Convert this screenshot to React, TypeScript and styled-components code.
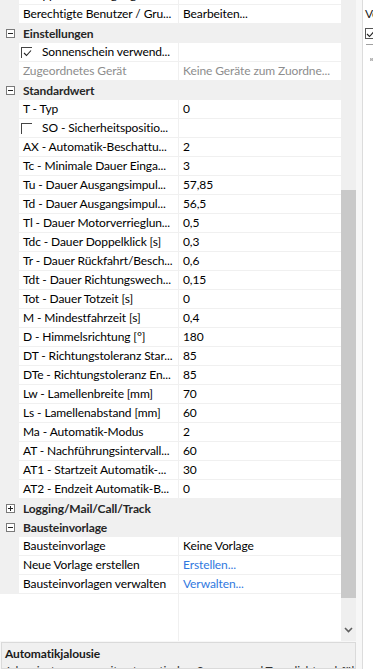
import React from "react"
import styled, { createGlobalStyle } from "styled-components"

type Row =
  | { kind: "cat"; label: string; open: boolean }
  | { kind: "prop"; name: string; value?: string; link?: boolean; disabled?: boolean; check?: boolean }

const rows: Row[] = [
  { kind: "prop", name: "Gruppenberechtigung", value: "" },
  { kind: "prop", name: "Berechtigte Benutzer / Gru...", value: "Bearbeiten..." },
  { kind: "cat", label: "Einstellungen", open: true },
  { kind: "prop", name: "Sonnenschein verwend...", value: "", check: true },
  { kind: "prop", name: "Zugeordnetes Gerät", value: "Keine Geräte zum Zuordne...", disabled: true },
  { kind: "cat", label: "Standardwert", open: true },
  { kind: "prop", name: "T - Typ", value: "0" },
  { kind: "prop", name: "SO - Sicherheitspositio...", value: "", check: false },
  { kind: "prop", name: "AX - Automatik-Beschattu...", value: "2" },
  { kind: "prop", name: "Tc - Minimale Dauer Einga...", value: "3" },
  { kind: "prop", name: "Tu - Dauer Ausgangsimpul...", value: "57,85" },
  { kind: "prop", name: "Td - Dauer Ausgangsimpul...", value: "56,5" },
  { kind: "prop", name: "Tl - Dauer Motorverrieglun...", value: "0,5" },
  { kind: "prop", name: "Tdc - Dauer Doppelklick [s]", value: "0,3" },
  { kind: "prop", name: "Tr - Dauer Rückfahrt/Besch...", value: "0,6" },
  { kind: "prop", name: "Tdt - Dauer Richtungswech...", value: "0,15" },
  { kind: "prop", name: "Tot - Dauer Totzeit [s]", value: "0" },
  { kind: "prop", name: "M - Mindestfahrzeit [s]", value: "0,4" },
  { kind: "prop", name: "D - Himmelsrichtung [°]", value: "180" },
  { kind: "prop", name: "DT - Richtungstoleranz Star...", value: "85" },
  { kind: "prop", name: "DTe - Richtungstoleranz En...", value: "85" },
  { kind: "prop", name: "Lw - Lamellenbreite [mm]", value: "70" },
  { kind: "prop", name: "Ls - Lamellenabstand [mm]", value: "60" },
  { kind: "prop", name: "Ma - Automatik-Modus", value: "2" },
  { kind: "prop", name: "AT - Nachführungsintervall...", value: "60" },
  { kind: "prop", name: "AT1 - Startzeit Automatik-...", value: "30" },
  { kind: "prop", name: "AT2 - Endzeit Automatik-B...", value: "0" },
  { kind: "cat", label: "Logging/Mail/Call/Track", open: false },
  { kind: "cat", label: "Bausteinvorlage", open: true },
  { kind: "prop", name: "Bausteinvorlage", value: "Keine Vorlage" },
  { kind: "prop", name: "Neue Vorlage erstellen", value: "Erstellen...", link: true },
  { kind: "prop", name: "Bausteinvorlagen verwalten", value: "Verwalten...", link: true },
]

const Expander: React.FC<{ open: boolean }> = ({ open }) => (
  <S.Expander>
    <svg width="9" height="9" viewBox="0 0 9 9">
      <rect x="0.5" y="0.5" width="8" height="8" fill="#fff" stroke="#7a7a7a" />
      <line x1="2" y1="4.5" x2="7" y2="4.5" stroke="#222" />
      {!open && <line x1="4.5" y1="2" x2="4.5" y2="7" stroke="#222" />}
    </svg>
  </S.Expander>
)

const CheckMark = () => (
  <svg width="9" height="8" viewBox="0 0 9 8">
    <polyline points="1,4 3.5,6.5 8,1.5" fill="none" stroke="#222" strokeWidth="1.1" />
  </svg>
)

export default function App() {
  return (
    <>
      <GlobalStyle />
      <S.Page>
        <S.LeftPane>
          <S.GridArea>
            <S.GridBody>
              <S.Rows>
                {rows.map((r, i) =>
                  r.kind === "cat" ? (
                    <S.CatRow key={i}>
                      <Expander open={r.open} />
                      <S.CatLabel>{r.label}</S.CatLabel>
                    </S.CatRow>
                  ) : (
                    <S.PropRow key={i}>
                      <S.Margin />
                      <S.Name disabled={r.disabled}>
                        {r.check !== undefined && <S.Check>{r.check && <CheckMark />}</S.Check>}
                        {r.name}
                      </S.Name>
                      <S.Value disabled={r.disabled} link={r.link}>
                        {r.value}
                      </S.Value>
                    </S.PropRow>
                  )
                )}
              </S.Rows>
              <S.Filler>
                <div />
                <S.FillerName />
                <div />
              </S.Filler>
            </S.GridBody>
            <S.Scrollbar>
              <S.Track>
                <S.Thumb />
              </S.Track>
              <S.ArrowButton>
                <svg width="9" height="6" viewBox="0 0 9 6">
                  <polyline points="1,1 4.5,4.5 8,1" fill="none" stroke="#606060" strokeWidth="1.6" />
                </svg>
              </S.ArrowButton>
            </S.Scrollbar>
          </S.GridArea>
          <S.Description>
            <S.DescTitle>Automatikjalousie</S.DescTitle>
            <S.DescText>Jalousiesteuerung mit automatischer Sonnen- und Tageslichtnachführung</S.DescText>
          </S.Description>
        </S.LeftPane>
        <S.RightPane>
          <S.SideCut>Aktiv</S.SideCut>
          <S.SideLabel>Verbindungen</S.SideLabel>
          <S.SideCheck>
            <CheckMark />
          </S.SideCheck>
          <S.SideRule />
          <S.SideExpander>
            <Expander open={true} />
          </S.SideExpander>
        </S.RightPane>
      </S.Page>
    </>
  )
}

const GlobalStyle = createGlobalStyle`
  html, body {
    margin: 0;
    padding: 0;
    background: #fff;
  }
  body {
    font-family: Lato, "Noto Sans", sans-serif;
    font-size: 12px;
    letter-spacing: -0.1px;
    color: #000;
  }
`

const S = {
  Page: styled.div`
    display: flex;
    width: 373px;
    height: 669px;
    overflow: hidden;
  `,
  LeftPane: styled.div`
    display: flex;
    flex-direction: column;
    width: 362px;
    background: #f7f7f7;
  `,
  GridArea: styled.div`
    display: flex;
    height: 641px;
    flex-shrink: 0;
  `,
  GridBody: styled.div`
    display: flex;
    flex-direction: column;
    width: 341px;
    background: #fff;
    overflow: hidden;
  `,
  Rows: styled.div`
    margin-top: -14px;
    display: flex;
    flex-direction: column;
  `,
  PropRow: styled.div`
    display: grid;
    grid-template-columns: 19px 160px 1fr;
    height: 19px;
    box-sizing: border-box;
    border-bottom: 1px solid #f0f0f0;
    line-height: 18px;
  `,
  Margin: styled.div`
    background: #f0f0f0;
  `,
  Name: styled.div<{ disabled?: boolean }>`
    display: flex;
    align-items: center;
    padding-left: 4px;
    border-right: 1px solid #f0f0f0;
    white-space: nowrap;
    overflow: hidden;
    color: ${({ disabled }) => (disabled ? "#8d8d8d" : "#000")};
  `,
  Value: styled.div<{ disabled?: boolean; link?: boolean }>`
    padding-left: 4px;
    white-space: nowrap;
    overflow: hidden;
    color: ${({ disabled, link }) => (disabled ? "#8d8d8d" : link ? "#2f78e0" : "#000")};
  `,
  Check: styled.span`
    display: flex;
    align-items: center;
    justify-content: center;
    width: 11px;
    height: 11px;
    box-sizing: border-box;
    margin: 0 10px 0 -2px;
    border-top: 1px solid #444;
    border-left: 1px solid #444;
    padding: 1px 0 0 1px;
  `,
  CatRow: styled.div`
    display: grid;
    grid-template-columns: 19px 1fr;
    align-items: center;
    height: 19px;
    background: #f0f0f0;
    line-height: 19px;
  `,
  Expander: styled.span`
    display: flex;
    justify-content: center;
    padding-left: 1px;
  `,
  CatLabel: styled.div`
    padding-left: 4px;
    font-weight: bold;
    color: #262626;
    white-space: nowrap;
  `,
  Filler: styled.div`
    flex: 1;
    display: grid;
    grid-template-columns: 19px 160px 1fr;
  `,
  FillerName: styled.div`
    border-right: 1px solid #f0f0f0;
  `,
  Scrollbar: styled.div`
    display: flex;
    flex-direction: column;
    width: 15px;
    background: #efefef;
  `,
  Track: styled.div`
    flex: 1;
    padding-top: 190px;
    padding-bottom: 29px;
    display: flex;
    justify-content: center;
  `,
  Thumb: styled.div`
    width: 15px;
    background: #c9c9c9;
  `,
  ArrowButton: styled.div`
    height: 14px;
    display: flex;
    justify-content: center;
    align-items: flex-start;
  `,
  Description: styled.div`
    flex: 1;
    margin: 1px 6px 0 1px;
    padding: 2px 3px;
    border: 1px solid #dadada;
    background: #f0f0f0;
    overflow: hidden;
  `,
  DescTitle: styled.div`
    font-weight: bold;
    line-height: 17px;
    color: #1a1a1a;
  `,
  DescText: styled.div`
    line-height: 17px;
    color: #333;
    white-space: nowrap;
  `,
  RightPane: styled.div`
    flex: 1;
    display: flex;
    flex-direction: column;
    border-left: 1px solid #dcdcdc;
    background: #fff;
    padding-left: 2px;
    overflow: hidden;
  `,
  SideCut: styled.div`
    margin-top: -12px;
    height: 16px;
    line-height: 16px;
    white-space: nowrap;
  `,
  SideLabel: styled.div`
    margin-top: 2px;
    line-height: 16px;
    white-space: nowrap;
    color: #222;
  `,
  SideCheck: styled.span`
    display: flex;
    align-items: center;
    justify-content: center;
    margin-top: 6px;
    width: 11px;
    height: 11px;
    box-sizing: border-box;
    border: 1px solid #555;
  `,
  SideRule: styled.div`
    margin-top: 5px;
    margin-left: 1px;
    height: 1px;
    background: #a0a0a0;
  `,
  SideExpander: styled.div`
    margin-top: 10px;
    margin-left: 4px;
  `,
}
